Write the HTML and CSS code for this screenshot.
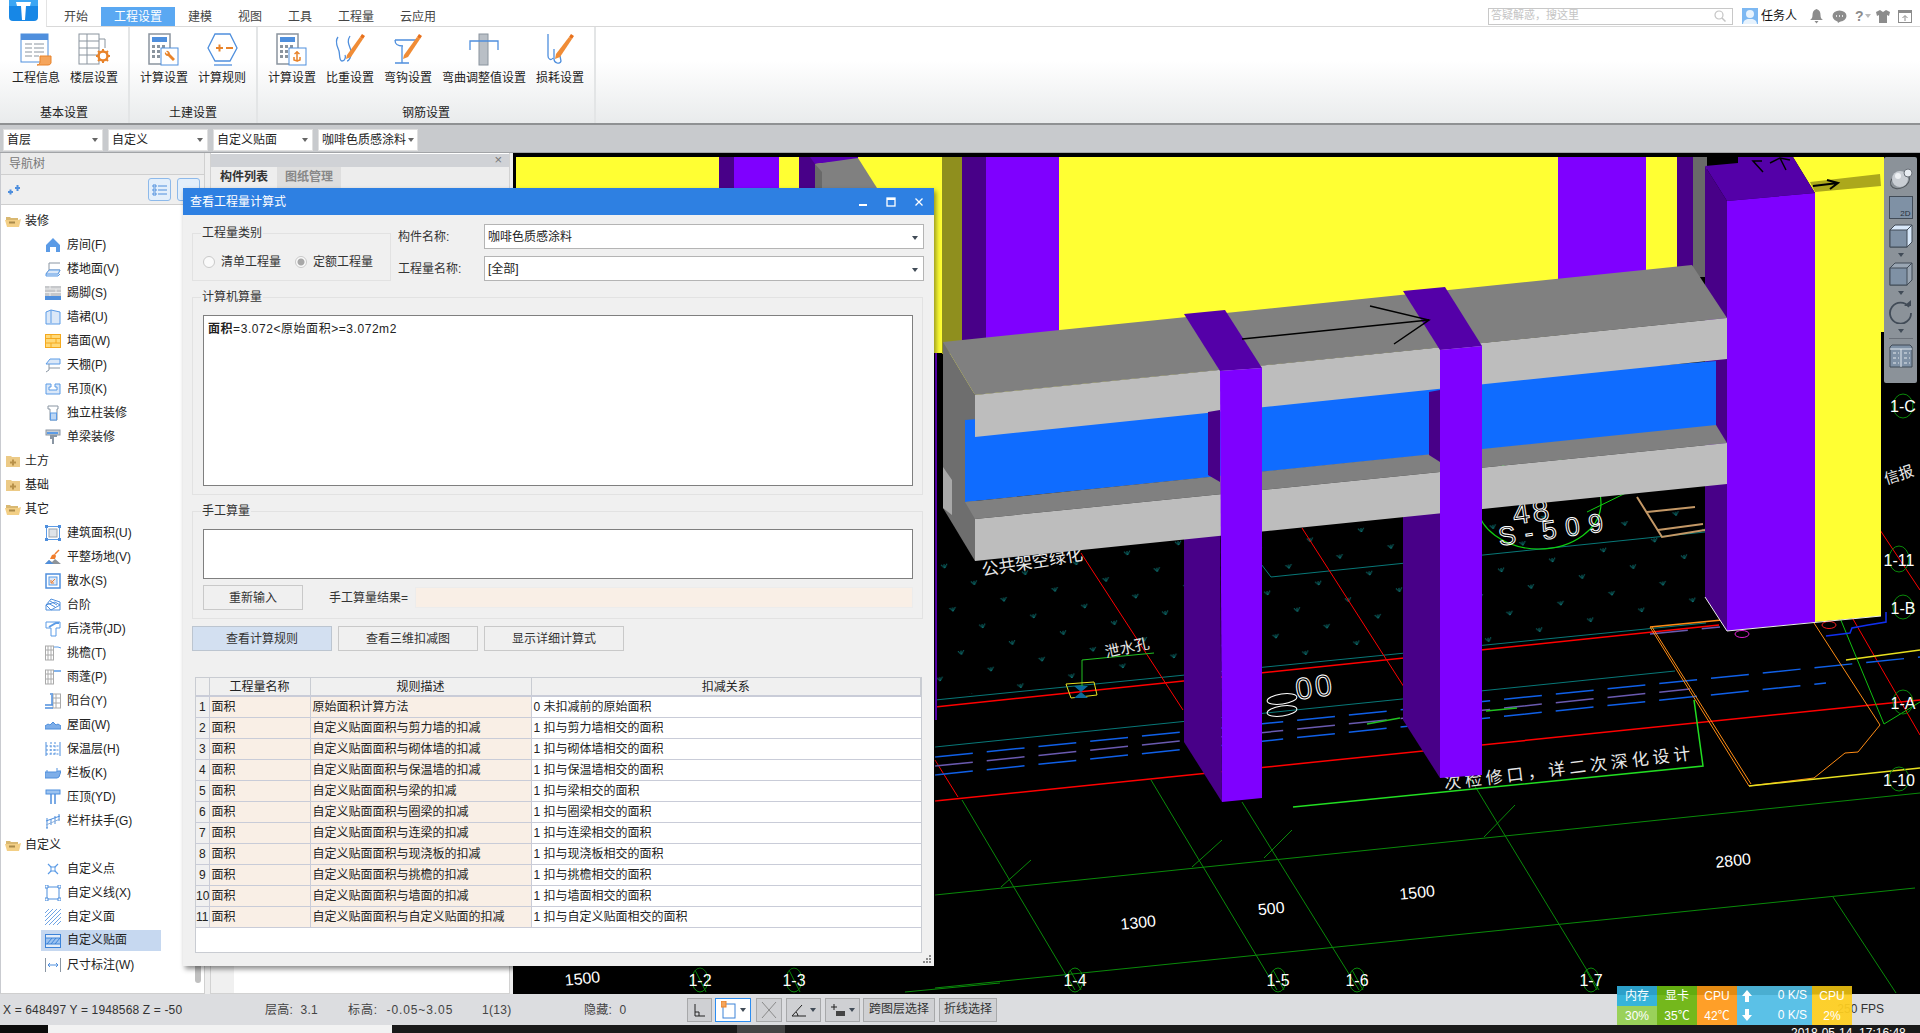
FILE: index.html
```html
<!DOCTYPE html>
<html lang="zh-CN">
<head>
<meta charset="utf-8">
<title>查看工程量计算式</title>
<link rel="stylesheet" href="styles.css">
</head>
<body>
<svg class="defs" width="0" height="0" aria-hidden="true">
  <symbol id="f-open" viewBox="0 0 16 12"><path d="M1 2h4l1 1h7v2H1z" fill="#d9b871"/><path d="M0 5h13l3-1-2 8H2z" fill="#f3cf85"/><rect x="4" y="6.500" width="6" height="2" fill="#a98a4a"/></symbol>
  <symbol id="f-closed" viewBox="0 0 16 12"><path d="M1 1h5l1 1h8v10H1z" fill="#ecca86"/><path d="M7 4.500h2v2h2v2H9v2H7v-2H5v-2h2z" fill="#b8914a"/></symbol>
  <symbol id="i-room" viewBox="0 0 16 16"><path d="M8 1 1 8v7h4v-5h6v5h4V8z" fill="#5b9be6"/></symbol>
  <symbol id="i-floor" viewBox="0 0 16 16"><path d="M4 9V2h11M1 13l3-4h11l-2 4z" fill="none" stroke="#8a96a3"/><path d="M1 13l3-4h11l-2 4H1v2h12l2-2" fill="#dbe8f8" stroke="#5b9be6"/></symbol>
  <symbol id="i-skirt" viewBox="0 0 16 16"><rect width="16" height="10" y="1" fill="#c6c8cb"/><path d="M0 4h16M0 7.500h16M5 1v3M11 4v3.500M5 7.500V11" stroke="#eee"/><rect y="11" width="16" height="4" fill="#4f8fdd"/></symbol>
  <symbol id="i-wains" viewBox="0 0 16 16"><path d="M1 3l5-2 9 2v12H1z" fill="#dbe8f8" stroke="#5b9be6"/><path d="M6 1v13" stroke="#5b9be6"/></symbol>
  <symbol id="i-wall" viewBox="0 0 16 16"><rect x=".5" y="1.500" width="15" height="13" fill="#ffd979" stroke="#f4a91e"/><path d="M1 5.500h14M1 10h14M6 2v3.500M11 5.500V10M6 10v4.500" stroke="#f4a91e"/></symbol>
  <symbol id="i-ceil" viewBox="0 0 16 16"><path d="M1 7l4-5h10v5z" fill="#dbe8f8" stroke="#5b9be6"/><path d="M4 7v6L1 15M4 11h11" stroke="#8a96a3" fill="none"/></symbol>
  <symbol id="i-susp" viewBox="0 0 16 16"><path d="M1 3h5v3H4v3h8V6h-2V3h5v10H1z" fill="#dbe8f8" stroke="#5b9be6"/></symbol>
  <symbol id="i-col" viewBox="0 0 16 16"><path d="M3 1h10v3h-1v11H5V4H3z" fill="#fff" stroke="#8a96a3"/><rect x="5.500" y="8" width="6" height="7" fill="#bcd6f4" stroke="#5b9be6"/></symbol>
  <symbol id="i-beam" viewBox="0 0 16 16"><rect x="1" y="1" width="14" height="5" fill="#c8cdd2" stroke="#8a96a3"/><path d="M2 4h11" stroke="#5b9be6" stroke-width="2"/><path d="M12 7H6v2h2v6" fill="none" stroke="#8a96a3" stroke-width="2"/></symbol>
  <symbol id="i-area" viewBox="0 0 16 16"><rect x="1.500" y="1.500" width="13" height="13" fill="#fff" stroke="#5b9be6"/><rect x="4" y="4" width="8" height="8" fill="#dfe3e8" stroke="#9aa3ad"/><path d="M0 0h3v3H0zM13 0h3v3h-3zM0 13h3v3H0zM13 13h3v3h-3z" fill="#4f8fdd"/></symbol>
  <symbol id="i-grade" viewBox="0 0 16 16"><path d="M0 15l4-4 3 2 3-3 6 5z" fill="#8e949a"/><path d="M0 15l4-4 3 3 2 1z" fill="#4f8fdd"/><path d="M5 10l2-4 3-1 1 2-1 3z" fill="#f07d2c"/><path d="M10 5l4-4" stroke="#f07d2c" stroke-width="1.500"/></symbol>
  <symbol id="i-apron" viewBox="0 0 16 16"><rect x="1" y="1" width="14" height="14" fill="#fff" stroke="#4f8fdd" stroke-width="1.500"/><rect x="4" y="4" width="8" height="8" fill="#dbe8f8" stroke="#5b9be6"/><path d="M10 6 6.500 9.500M6 7v3h3" fill="none" stroke="#f07d2c"/></symbol>
  <symbol id="i-step" viewBox="0 0 16 16"><path d="M1 8l5-6 9 3v8H1z" fill="#fff" stroke="#4f8fdd"/><path d="M1 8l9-3 5 3-9 5zM3 6l7 4M5 4l7 4" fill="none" stroke="#4f8fdd"/></symbol>
  <symbol id="i-post" viewBox="0 0 16 16"><path d="M1 1h14v6h-4v8H6V7H1z" fill="#fff" stroke="#5b9be6"/><path d="M4 6l7-4h3" stroke="#5b9be6" stroke-width="2" fill="none"/></symbol>
  <symbol id="i-eave" viewBox="0 0 16 16"><rect x=".5" y="1" width="8" height="14" fill="#fff" stroke="#aaa"/><path d="M3 1v14M6 1v14M1 5h7M1 10h7" stroke="#aaa"/><path d="M9 2h4l3 1" stroke="#5b9be6" fill="none"/></symbol>
  <symbol id="i-canopy" viewBox="0 0 16 16"><rect x=".5" y="1" width="8" height="14" fill="#fff" stroke="#aaa"/><path d="M3 1v14M6 1v14M1 5h7M1 10h7" stroke="#aaa"/><path d="M9 2h7" stroke="#5b9be6" stroke-width="1.500"/></symbol>
  <symbol id="i-balc" viewBox="0 0 16 16"><rect x="8" y="1" width="7.500" height="14" fill="#fff" stroke="#aaa"/><path d="M11 1v14M8 5h7M8 10h7" stroke="#aaa"/><path d="M0 12h8M5 1h3M7 2v10M0 15h8" stroke="#4f8fdd" stroke-width="1.500" fill="none"/></symbol>
  <symbol id="i-roof" viewBox="0 0 16 16"><path d="M0 12V9l3-2 2 1 3-3 3 3 2-1 3 2v3z" fill="#7eaee8" stroke="#4f8fdd"/></symbol>
  <symbol id="i-insu" viewBox="0 0 16 16"><path d="M1 1v14M15 1v14" stroke="#4f8fdd" fill="none"/><path d="M6 1v14M10 1v14M1 5h14M1 9h14M1 13h14" stroke="#4f8fdd" stroke-dasharray="2 1.500"/></symbol>
  <symbol id="i-para" viewBox="0 0 16 16"><path d="M0 7h11l2-1h3l-2 6-2 1H0z" fill="#7eaee8" stroke="#4f8fdd"/><path d="M2 7V5M12 6V3" stroke="#4f8fdd"/></symbol>
  <symbol id="i-cope" viewBox="0 0 16 16"><rect x="1" y="1" width="14" height="4" fill="#9cc3f0" stroke="#4f8fdd"/><path d="M6 5v10M10 5v10" stroke="#4f8fdd" stroke-width="1.500"/></symbol>
  <symbol id="i-rail" viewBox="0 0 16 16"><path d="M1 8l14-5M2 5v10M6 6v6M10 3v8M14 1v7M1 15h2" stroke="#4f8fdd" fill="none"/><path d="M1 12l14-6" stroke="#8aaedb"/></symbol>
  <symbol id="i-pt" viewBox="0 0 16 16"><path d="M3 3l10 10M13 3L3 13" stroke="#5b9be6" stroke-width="1.200"/><rect x="6" y="6" width="4" height="4" fill="#fff" stroke="#5b9be6"/></symbol>
  <symbol id="i-line" viewBox="0 0 16 16"><rect x="2" y="2" width="12" height="12" fill="#fff" stroke="#4f8fdd"/><path d="M0 0h3v3H0zM13 0h3v3h-3zM0 13h3v3H0zM13 13h3v3h-3z" fill="#fff" stroke="#4f8fdd"/></symbol>
  <symbol id="i-hatch" viewBox="0 0 16 16"><path d="M0 4l4-4M0 8l8-8M0 12 12 0M0 16 16 0M4 16 16 4M8 16l8-8M12 16l4-4" stroke="#6fa4e4"/></symbol>
  <symbol id="i-patch" viewBox="0 0 16 16"><rect x=".5" y="1.500" width="15" height="13" fill="#e3edf9" stroke="#3c83d8"/><rect x="1" y="5" width="14" height="6" fill="#9cc3f0"/><path d="M1 5h14M1 11h14" stroke="#3c83d8"/><path d="M2 11l5-6M6 11l5-6M10 11l5-6" stroke="#3c83d8"/></symbol>
  <symbol id="i-dim" viewBox="0 0 16 16"><path d="M.5 1v14M15.500 1v14" stroke="#8a96a3" fill="none"/><path d="M3 8h10M5 6 3 8l2 2M11 6l2 2-2 2" stroke="#4f8fdd" fill="none"/></symbol>
  <symbol id="r-calc" viewBox="0 0 26 34"><rect x="1" y="1" width="21" height="30" fill="#fff" stroke="#8a949e" stroke-width="1.500"/><rect x="4" y="4" width="15" height="5" fill="#4f8fdd"/><path d="M4 12h3v3H4zM9 12h3v3H9zM14 12h3v3h-3zM4 17h3v3H4zM9 17h3v3H9zM4 22h3v3H4zM9 22h3v3H9z" fill="#8a949e"/></symbol>
</svg>

<div class="app">
  <header class="topbar">
    <div class="logo">
      <svg width="29" height="22" viewBox="0 0 29 22"><path d="M0 0h29v17a4 4 0 0 1-4 4H4a4 4 0 0 1-4-4z" fill="#1787e6"/><path d="M0 0h29v6H0z" fill="#3ba6f4"/><path d="M7 2h15l-1 4h-4l-1 14h-3L12 6H8z" fill="#fff"/></svg>
    </div>
    <nav class="tabs">
      <span class="tab">开始</span>
      <span class="tab tab-active">工程设置</span>
      <span class="tab">建模</span>
      <span class="tab">视图</span>
      <span class="tab">工具</span>
      <span class="tab tab-wide">工程量</span>
      <span class="tab tab-wide">云应用</span>
    </nav>
    <div class="top-right">
      <div class="search"><span>答疑解惑，搜这里</span>
        <svg width="12" height="12" viewBox="0 0 12 12"><circle cx="5" cy="5" r="4" fill="none" stroke="#c4c4c4" stroke-width="1.200"/><path d="M8 8l3.500 3.500" stroke="#c4c4c4" stroke-width="1.500"/></svg>
      </div>
      <svg class="avatar" width="16" height="16" viewBox="0 0 16 16"><rect width="16" height="16" fill="#7db8f2"/><circle cx="8" cy="6" r="4" fill="#e8f3fd"/><path d="M1 16c1-5 4-5 7-5s6 0 7 5z" fill="#e8f3fd"/></svg>
      <span class="user">任务人</span>
      <svg class="ti ti-bell" width="13" height="15" viewBox="0 0 13 15"><path d="M6.500 0C3.500 1 2.500 3 2.500 6c0 3-1 4-2.500 5h13c-1.500-1-2.500-2-2.500-5 0-3-1-5-4-6zM4.500 12h4l-2 2.500z" fill="#8c8c8c"/></svg>
      <svg class="ti ti-chat" width="15" height="13" viewBox="0 0 15 13"><ellipse cx="7.500" cy="6" rx="7" ry="5.500" fill="#8c8c8c"/><path d="M5 10l4 1-3 2z" fill="#8c8c8c"/><path d="M4 6h1M7 6h1M10 6h1" stroke="#fff" stroke-width="1.500"/></svg>
      <span class="help">?<i class="caret caret-light"></i></span>
      <svg class="ti ti-shirt" width="14" height="13" viewBox="0 0 14 13"><path d="M4 0 0 2l1 4 2-1v8h8V5l2 1 1-4-4-2-3 2z" fill="#8c8c8c"/></svg>
      <svg class="ti ti-up" width="14" height="13" viewBox="0 0 14 13"><rect x=".5" y=".5" width="13" height="12" fill="none" stroke="#8c8c8c"/><rect x="1" y="1" width="12" height="2" fill="#8c8c8c"/><path d="M7 11V6M4.500 8 7 5.500 9.500 8" stroke="#8c8c8c" fill="none"/></svg>
    </div>
  </header>

  <section class="ribbon">
    <div class="rgroup rg1">
      <div class="ritems">
        <div class="ritem"><svg width="32" height="34" viewBox="0 0 32 34"><rect x="1" y="1" width="27" height="28" fill="#fff" stroke="#4f8fdd"/><rect x="1" y="1" width="27" height="6" fill="#4f8fdd"/><path d="M5 11h7M14 11h10M5 15h7M14 15h10M5 19h7M14 19h10M5 23h7M14 23h5" stroke="#8a949e"/><path d="M20 23h11v7a3 3 0 0 1-3 2H17c2 0 3-2 3-3z" fill="#f5a55c" stroke="#e8832a"/></svg><span>工程信息</span></div>
        <div class="ritem"><svg width="32" height="34" viewBox="0 0 32 34"><rect x="1" y="1" width="20" height="30" fill="#fff" stroke="#8a949e"/><path d="M1 8h20M1 15h20M1 22h20M9 1v30" stroke="#8a949e"/><path d="M21 6h6v9" fill="none" stroke="#8a949e"/><circle cx="25" cy="23" r="4.500" fill="none" stroke="#e8832a" stroke-width="2.500"/><path d="M25 16v2M25 28v2M18 23h2M30 23h2M20 18l1.500 1.500M30 28l-1.500-1.500M30 18l-1.500 1.500M20 28l1.500-1.500" stroke="#e8832a" stroke-width="2"/></svg><span>楼层设置</span></div>
      </div>
      <div class="rlabel">基本设置</div>
    </div>
    <div class="rgroup rg2">
      <div class="ritems">
        <div class="ritem"><svg width="32" height="34" viewBox="0 0 32 34"><use href="#r-calc" width="26" height="34"/><rect x="13" y="15" width="17" height="17" fill="#fff" stroke="#4f8fdd"/><path d="M17 19a3 3 0 0 0 3 4l5 5 2-2-5-5a3 3 0 0 0-4-3l2 2-1 1z" fill="#e8832a"/></svg><span>计算设置</span></div>
        <div class="ritem"><svg width="32" height="34" viewBox="0 0 32 34"><path d="M9 1h15l7 14-7 13H9L2 15z" fill="#fff" stroke="#4f8fdd" stroke-width="1.300"/><path d="M10 15h7M13.500 11.500v7M20 15h7" stroke="#e8832a" stroke-width="2"/><path d="M8 32h18" stroke="#4f8fdd" stroke-width="1.300"/></svg><span>计算规则</span></div>
      </div>
      <div class="rlabel">土建设置</div>
    </div>
    <div class="rgroup rg3">
      <div class="ritems">
        <div class="ritem"><svg width="32" height="34" viewBox="0 0 32 34"><use href="#r-calc" width="26" height="34"/><rect x="13" y="15" width="17" height="17" fill="#fff" stroke="#4f8fdd"/><path d="M21 18v10l-3-1v-3M21 28l3-1v-3M18.500 21l2.500-2 2.500 2" fill="none" stroke="#e8832a" stroke-width="1.500"/></svg><span>计算设置</span></div>
        <div class="ritem"><svg width="32" height="34" viewBox="0 0 32 34"><path d="M4 4c-4 5 0 10 1 14s0 10 3 10 4-4 3-6M16 3c-4 6 0 10 1 15s-2 10-4 10" fill="none" stroke="#4f8fdd" stroke-width="1.300"/><path d="M13 22 26 4l3 2-12 18-5 2z" fill="#f08c36"/><path d="M26 4l2-3 3 2-2 3z" fill="#e8701a"/></svg><span>比重设置</span></div>
        <div class="ritem"><svg width="32" height="34" viewBox="0 0 32 34"><path d="M3 7h22M3 7c0 5 3 6 8 6M3 30h14M10 13v17" fill="none" stroke="#4f8fdd" stroke-width="1.300"/><path d="M12 22 25 4l3 2-12 18-5 2z" fill="#f08c36"/><path d="M25 4l2-3 3 2-2 3z" fill="#e8701a"/></svg><span>弯钩设置</span></div>
        <div class="ritem ritem-wide"><svg width="32" height="34" viewBox="0 0 32 34"><rect x="11" y="1" width="9" height="31" fill="#b9bfc6" stroke="#8a949e"/><path d="M2 17v-9h28v9" fill="none" stroke="#4f8fdd" stroke-width="1.300"/></svg><span>弯曲调整值设置</span></div>
        <div class="ritem"><svg width="32" height="34" viewBox="0 0 32 34"><path d="M4 1v22c0 3 3 5 5 2M10 16v10c0 4 6 6 7 2l-1-5" fill="none" stroke="#4f8fdd" stroke-width="1.300"/><path d="M12 21 25 4l3 2-12 18-5 2z" fill="#f08c36"/><path d="M25 4l2-3 3 2-2 3z" fill="#e8701a"/></svg><span>损耗设置</span></div>
      </div>
      <div class="rlabel">钢筋设置</div>
    </div>
    <div class="rfill"></div>
  </section>

  <section class="combos">
    <div class="combo">首层<i class="caret"></i></div>
    <div class="combo">自定义<i class="caret"></i></div>
    <div class="combo">自定义贴面<i class="caret"></i></div>
    <div class="combo combo-tight">咖啡色质感涂料<i class="caret"></i></div>
  </section>

  <main class="main">
    <aside class="nav">
      <div class="nav-head">导航树</div>
      <div class="nav-tools">
        <svg class="spark" width="14" height="12" viewBox="0 0 14 12"><path d="M1 8h5M3.500 5.500v5M8 4h5M10.500 1v6" stroke="#4f8fdd" stroke-width="2"/></svg>
        <span class="nbtn"><svg width="16" height="14" viewBox="0 0 16 14"><path d="M1 2h3v2H1zM1 6h3v2H1zM1 10h3v2H1z" fill="none" stroke="#4f8fdd"/><path d="M6 3h9M6 7h9M6 11h9" stroke="#4f8fdd"/></svg></span>
        <span class="nbtn"></span>
      </div>
      <ul class="tree">
        <li class="folder"><svg width="16" height="12"><use href="#f-open"/></svg>装修</li>
        <li><svg width="16" height="16"><use href="#i-room"/></svg>房间(F)</li>
        <li><svg width="16" height="16"><use href="#i-floor"/></svg>楼地面(V)</li>
        <li><svg width="16" height="16"><use href="#i-skirt"/></svg>踢脚(S)</li>
        <li><svg width="16" height="16"><use href="#i-wains"/></svg>墙裙(U)</li>
        <li><svg width="16" height="16"><use href="#i-wall"/></svg>墙面(W)</li>
        <li><svg width="16" height="16"><use href="#i-ceil"/></svg>天棚(P)</li>
        <li><svg width="16" height="16"><use href="#i-susp"/></svg>吊顶(K)</li>
        <li><svg width="16" height="16"><use href="#i-col"/></svg>独立柱装修</li>
        <li><svg width="16" height="16"><use href="#i-beam"/></svg>单梁装修</li>
        <li class="folder"><svg width="16" height="12"><use href="#f-closed"/></svg>土方</li>
        <li class="folder"><svg width="16" height="12"><use href="#f-closed"/></svg>基础</li>
        <li class="folder"><svg width="16" height="12"><use href="#f-open"/></svg>其它</li>
        <li><svg width="16" height="16"><use href="#i-area"/></svg>建筑面积(U)</li>
        <li><svg width="16" height="16"><use href="#i-grade"/></svg>平整场地(V)</li>
        <li><svg width="16" height="16"><use href="#i-apron"/></svg>散水(S)</li>
        <li><svg width="16" height="16"><use href="#i-step"/></svg>台阶</li>
        <li><svg width="16" height="16"><use href="#i-post"/></svg>后浇带(JD)</li>
        <li><svg width="16" height="16"><use href="#i-eave"/></svg>挑檐(T)</li>
        <li><svg width="16" height="16"><use href="#i-canopy"/></svg>雨蓬(P)</li>
        <li><svg width="16" height="16"><use href="#i-balc"/></svg>阳台(Y)</li>
        <li><svg width="16" height="16"><use href="#i-roof"/></svg>屋面(W)</li>
        <li><svg width="16" height="16"><use href="#i-insu"/></svg>保温层(H)</li>
        <li><svg width="16" height="16"><use href="#i-para"/></svg>栏板(K)</li>
        <li><svg width="16" height="16"><use href="#i-cope"/></svg>压顶(YD)</li>
        <li><svg width="16" height="16"><use href="#i-rail"/></svg>栏杆扶手(G)</li>
        <li class="folder"><svg width="16" height="12"><use href="#f-open"/></svg>自定义</li>
        <li><svg width="16" height="16"><use href="#i-pt"/></svg>自定义点</li>
        <li><svg width="16" height="16"><use href="#i-line"/></svg>自定义线(X)</li>
        <li><svg width="16" height="16"><use href="#i-hatch"/></svg>自定义面</li>
        <li class="selected"><svg width="16" height="16"><use href="#i-patch"/></svg>自定义贴面</li>
        <li><svg width="16" height="16"><use href="#i-dim"/></svg>尺寸标注(W)</li>
      </ul>
      <span class="nav-scroll"></span>
    </aside>

    <aside class="list">
      <div class="list-head"><span class="close">×</span></div>
      <div class="list-tabs"><span class="ltab ltab-on">构件列表</span><span class="ltab">图纸管理</span></div>
      <div class="list-body"></div>
    </aside>

    <div class="view">
      <svg class="scene" width="1407" height="841" viewBox="513 153 1407 841">
        <defs>
          <pattern id="trees" width="52" height="44" patternUnits="userSpaceOnUse" patternTransform="rotate(-11)">
            <path d="M10 8l3 4 3-4M13 8v4M36 30l3 4 3-4M39 30v4" stroke="#0b7272" fill="none"/>
          </pattern>
        </defs>
        <rect x="513" y="153" width="1407" height="841" fill="#000"/>

        <!-- floor plan -->
        <polygon points="937,555 1710,505 1710,620 937,697" fill="url(#trees)"/>
        <path d="M935 700 1706 623M935 747 1675 671M1271 577 1705 532M1271 577 1258 560" fill="none" stroke="#087878"/>
        <g fill="none" stroke="#ff0000" stroke-width="1">
          <path d="M935 801 1920 700" stroke-width="1.500"/>
          <path d="M935 707 1719 625" stroke-width="1.500"/>
          <path d="M1081 553 1183 710M1302 528 1404 687M935 760 958 797M1880 530 1920 590M1842 600 1920 735"/>
        </g>
        <g fill="none" stroke="#1060e8" stroke-width="1.500" stroke-dasharray="38 14">
          <path d="M935 757 1920 657M935 775 1826 683"/>
        </g>
        <path d="M935 766 1690 689M1650 634 1720 627" fill="none" stroke="#6a5ab0" stroke-width="1.500" stroke-dasharray="38 14"/>
        <g fill="none" stroke="#0a8a0a" stroke-width="1">
          <path d="M935 895 1920 793M935 988 1915 888"/>
          <path d="M962 800 1075 990M1151 780 1277 990M1242 802 1359 990M1470 778 1599 990M1833 897 1896 993"/>
          <path d="M1001 887 1031 860M1192 867 1222 840M1264 858 1292 830M1484 837 1515 805"/>
        </g>
        <path d="M1293 807 1703 766 1694 700" fill="none" stroke="#22dd22" stroke-width="1.500"/>
        <path d="M1082 688V660L1154 653" fill="none" stroke="#22c022" stroke-width="1"/>
        <path d="M1367 724 1400 718M1486 711 1517 708" stroke="#22c022" stroke-width="1.500" fill="none"/>
        <path d="M1066 684 1094 682 1097 695 1071 698z" fill="none" stroke="#e8e020"/>
        <path d="M1074 686h14l-14 12h14z" fill="#0a6a9a"/>
        <g fill="none" stroke="#ff8c14" stroke-width="1">
          <path d="M1650 627 1749 786 1814 778 1845 753 1858 752 1880 725 1814 623"/>
          <path d="M1652 627 1751 784"/>
          <path d="M1650 627 1722 620" stroke-width="1.500"/>
        </g>
        <path d="M1749 786 1920 768" stroke="#e8e020" stroke-width="1.500" fill="none"/>
        <path d="M1846 660 1920 650" stroke="#e8e020" stroke-width="1.500" fill="none"/>
        <path d="M1840 618 1884 724 1920 702" stroke="#10c010" fill="none"/>
        <path d="M1826 636 1850 633 1852 628 1868 625 1886 622 1886 612" fill="none" stroke="#1030f0" stroke-width="1.500"/>
        <ellipse cx="1742" cy="634" rx="7" ry="3.500" fill="none" stroke="#e020d0"/>
        <ellipse cx="1829" cy="625" rx="7" ry="3.500" fill="none" stroke="#f02020"/>
        <path d="M1637 497 1662 537 1705 530M1647 512 1695 507M1658 530 1703 524" fill="none" stroke="#c49866" stroke-width="2"/>
        <ellipse cx="1539" cy="503" rx="62" ry="46" fill="none" stroke="#10d010" stroke-width="1.200"/>
        <path d="M1587 512 1632 490" stroke="#10d010" fill="none"/>

        <g class="cad">
          <text x="583" y="984" transform="rotate(-6 583 984)" text-anchor="middle">1500</text>
          <text x="1138" y="928" transform="rotate(-6 1138 921)" text-anchor="middle">1300</text>
          <text x="1271" y="914" transform="rotate(-6 1271 907)" text-anchor="middle">500</text>
          <text x="1417" y="898" transform="rotate(-6 1417 892)" text-anchor="middle">1500</text>
          <text x="1733" y="866" transform="rotate(-6 1733 860)" text-anchor="middle">2800</text>
          <text class="cad-s" x="1127" y="653" transform="rotate(-12 1127 647)" text-anchor="middle">泄水孔</text>
          <text class="cad-w" x="1032" y="568" transform="rotate(-9 1032 561)" text-anchor="middle">公共架空绿化</text>
          <text class="cad-l" x="1569" y="774" transform="rotate(-7 1569 767)" text-anchor="middle">次检修口，详二次深化设计</text>
          <text class="cad-s" x="1899" y="480" transform="rotate(-18 1899 475)" text-anchor="middle">信报</text>
        </g>
        <g class="cad-big">
          <text x="1315" y="697" transform="rotate(-8 1315 687)" text-anchor="middle">00</text>
          <text x="1532" y="522" transform="rotate(-8 1532 510)" text-anchor="middle">48</text>
          <text class="cad-long" x="1555" y="538" transform="rotate(-8 1555 528)" text-anchor="middle">S-509</text>
          <ellipse cx="1282" cy="699" rx="15" ry="5" transform="rotate(-8 1282 699)"/>
          <ellipse cx="1282" cy="711" rx="15" ry="5" transform="rotate(-8 1282 711)"/>
        </g>
        <g class="axis">
          <ellipse cx="700" cy="980" rx="8" ry="12"/><ellipse cx="794" cy="980" rx="8" ry="12"/>
          <ellipse cx="1075" cy="980" rx="8" ry="12"/><ellipse cx="1278" cy="980" rx="8" ry="12"/>
          <ellipse cx="1357" cy="980" rx="8" ry="12"/><ellipse cx="1591" cy="980" rx="8" ry="12"/>
          <ellipse cx="1903" cy="406" rx="10" ry="12"/><ellipse cx="1899" cy="559" rx="10" ry="13"/>
          <ellipse cx="1903" cy="607" rx="10" ry="12"/><ellipse cx="1903" cy="702" rx="10" ry="12"/><ellipse cx="1899" cy="779" rx="10" ry="12"/>
          <path d="M695 970 706 992M789 970 800 992M1070 970 1081 990M1273 970 1284 990M1352 970 1363 990M1586 970 1597 990"/>
        </g>
        <g class="axis-t">
          <text x="700" y="986">1-2</text><text x="794" y="986">1-3</text>
          <text x="1075" y="986">1-4</text><text x="1278" y="986">1-5</text>
          <text x="1357" y="986">1-6</text><text x="1591" y="986">1-7</text>
          <text x="1903" y="412">1-C</text><text x="1899" y="566">1-11</text>
          <text x="1903" y="614">1-B</text><text x="1903" y="709">1-A</text><text x="1899" y="786">1-10</text>
        </g>
        <path d="M905 992 1000 983" stroke="#0a8a0a" fill="none"/>

        <!-- walls and background columns -->
        <polygon points="516,157 1700,157 1700,320 975,395 942,353 516,353" fill="#ffff33"/>
        <rect x="719" y="157" width="15" height="40" fill="#480088"/>
        <rect x="734" y="157" width="45" height="40" fill="#7f00ff"/>
        <rect x="799" y="157" width="16" height="40" fill="#480088"/>
        <polygon points="810,157 858,157 858,160 815,164" fill="#5a00b4"/>
        <polygon points="815,164 858,158 877,188 815,188" fill="#808080"/>
        <polygon points="815,164 822,172 822,188 815,188" fill="#696969"/>
        <rect x="942" y="157" width="20" height="196" fill="#8f8f1e"/>
        <rect x="962" y="157" width="24" height="190" fill="#480088"/>
        <rect x="986" y="157" width="73" height="190" fill="#7f00ff"/>
        <rect x="1558" y="157" width="88" height="140" fill="#7f00ff"/>
        <rect x="1677" y="157" width="16" height="120" fill="#480088"/>
        <rect x="1693" y="157" width="14" height="120" fill="#696969"/>
        <path d="M936 353V720" stroke="#6a00d0" stroke-width="2"/>

        <!-- right column side, behind beams -->
        <polygon points="1705,166 1727,201 1727,631 1705,597" fill="#480088"/>
        <!-- right yellow wall -->
        <polygon points="1793,157 1884,157 1884,332 1881,332 1881,616 1815,622 1815,193" fill="#ffff33"/>
        <polygon points="1810,182 1880,174 1881,186 1815,192" fill="#aca81c"/>

        <!-- lower column sides -->
        <polygon points="1184,530 1220,530 1222,802 1184,742" fill="#480088"/>
        <polygon points="1403,480 1440,480 1440,778 1403,720" fill="#480088"/>

        <!-- beam -->
        <polygon points="943,342 975,395 975,561 943,508" fill="#6e6e6e"/>
        <polygon points="943,467 952,480 952,515 943,508" fill="#a8a8a8"/>
        <polygon points="943,342 1692,265 1727,318 975,395" fill="#808080"/>
        <polygon points="965,420 1716,361 1716,426 965,502" fill="#0f6cff"/>
        <polygon points="975,395 1727,318 1727,359 975,437" fill="#bdbdbd"/>
        <polygon points="965,502 1716,425 1727,443 975,519" fill="#808080"/>
        <polygon points="975,519 1727,443 1727,484 975,561" fill="#bdbdbd"/>
        <polygon points="1208,412 1220,410 1220,482 1208,475" fill="#480088"/>
        <polygon points="1429,392 1440,390 1440,462 1429,455" fill="#480088"/>

        <!-- column tops and fronts -->
        <polygon points="1184,314 1225,310 1262,368 1220,371" fill="#5400a8"/>
        <polygon points="1220,371 1262,368 1262,798 1222,802" fill="#7f00ff"/>
        <polygon points="1403,291 1445,287 1482,346 1440,350" fill="#5400a8"/>
        <polygon points="1440,350 1482,346 1482,775 1440,778" fill="#7f00ff"/>
        <polygon points="1705,166 1738,163 1738,157 1793,157 1815,193 1727,201" fill="#5400a8"/>
        <polygon points="1727,201 1815,193 1815,622 1727,631" fill="#7f00ff"/>
        <path d="M1705 597 1727 631 1881 616" fill="none" stroke="#eee"/>

        <!-- arrows -->
        <g fill="none" stroke="#000" stroke-width="1.500">
          <path d="M1242 339 1429 320M1370 306 1429 320 1394 344"/>
          <path d="M1763 172 1753 161 1762 161M1786 170 1780 158M1770 163 1780 158 1790 160"/>
          <path d="M1813 186 1838 183M1827 180 1838 183 1830 189" stroke-width="2"/>
        </g>
      </svg>

      <div class="cube-tools">
        <svg width="24" height="24" viewBox="0 0 24 24"><ellipse cx="11" cy="14" rx="10" ry="7" fill="none" stroke="#50565c" transform="rotate(-25 11 14)"/><circle cx="11" cy="12" r="8" fill="#c9ced4"/><circle cx="9" cy="9" r="3" fill="#eef1f4"/><circle cx="19" cy="6" r="4" fill="#e8edf2" stroke="#6a7078"/></svg>
        <span class="ct-box"><b>2D</b></span>
        <svg width="24" height="24" viewBox="0 0 24 24"><path d="M1 6l5-5h17v17l-5 5H1z" fill="#d9e9fa" stroke="#414b57"/><rect x="1" y="6" width="17" height="17" fill="#7f91a5" stroke="#414b57"/><path d="M18 6l5-5" stroke="#414b57"/></svg>
        <i class="caret caret-dark"></i>
        <svg width="24" height="24" viewBox="0 0 24 24"><path d="M1 6l5-5h17v17l-5 5H1z" fill="#9aa6b3" stroke="#414b57"/><rect x="1" y="6" width="17" height="17" fill="#7f91a5" stroke="#414b57"/><path d="M18 6l5-5" stroke="#414b57"/></svg>
        <i class="caret caret-dark"></i>
        <svg width="24" height="24" viewBox="0 0 24 24"><path d="M20 7A10.500 10.500 0 1 0 22 13" fill="none" stroke="#414b57" stroke-width="1.800"/><path d="M15 6h7V0z" fill="#414b57"/></svg>
        <i class="caret caret-dark"></i>
        <span class="ct-sep"></span>
        <svg width="24" height="24" viewBox="0 0 24 24"><path d="M1 3l2-2h18l2 2v20H1z" fill="#7f91a5" stroke="#414b57"/><path d="M1 5h22M12 5v18M4 9h3M4 14h3M4 19h3M9 9h1M9 14h1M9 19h1M15 9h3M15 14h3M15 19h3M20 9h1M20 14h1M20 19h1" stroke="#e3e8ee"/></svg>
      </div>
    </div>
  </main>

  <footer class="status">
    <span class="st st-coord">X = 648497 Y = 1948568 Z = -50</span>
    <span class="st st-floor">层高:&nbsp;&nbsp;3.1</span>
    <span class="st st-elev">标高:&nbsp;&nbsp;-0.05~3.05</span>
    <span class="st st-count">1(13)</span>
    <span class="st st-hide">隐藏:&nbsp;&nbsp;0</span>
    <span class="sb sb1"><svg width="14" height="14" viewBox="0 0 14 14"><path d="M2 1v12h10M2 9h4v4" fill="none" stroke="#222"/></svg></span>
    <span class="sb sb2"><svg width="16" height="18" viewBox="0 0 16 18"><rect x="2" y="3" width="12" height="14" fill="#fff" stroke="#3c83d8"/><rect x="0" y="0" width="5" height="6" fill="#f5a55c" stroke="#e8832a"/></svg><i class="caret caret-dark"></i></span>
    <span class="sb sb3"><svg width="16" height="18" viewBox="0 0 16 18"><path d="M1 1l14 16M15 1 1 17" stroke="#8a8a8a"/></svg></span>
    <span class="sb sb4"><svg width="16" height="14" viewBox="0 0 16 14"><path d="M1 13h14M1 13 11 2" stroke="#222" fill="none"/><path d="M7 13a6 6 0 0 0-2-4" stroke="#222" fill="none"/></svg><i class="caret caret-dark"></i></span>
    <span class="sb sb5"><svg width="16" height="14" viewBox="0 0 16 14"><path d="M1 4h6M4 1v6" stroke="#222"/><rect x="6" y="8" width="9" height="5" fill="#444"/></svg><i class="caret caret-dark"></i></span>
    <span class="sb sb6">跨图层选择</span>
    <span class="sb sb7">折线选择</span>
    <span class="fps">250 FPS</span>
    <div class="monitor">
      <div class="mc mc-mem"><span>内存</span><span class="m-low">30%</span></div>
      <div class="mc mc-gpu"><span>显卡</span><span>35℃</span></div>
      <div class="mc mc-cpu"><span>CPU</span><span>42℃</span></div>
      <div class="mc mc-net">
        <span><svg width="10" height="12" viewBox="0 0 10 12"><path d="M5 0 10 6H7v6H3V6H0z" fill="#fff"/></svg><em>0 K/S</em></span>
        <span><svg width="10" height="12" viewBox="0 0 10 12"><path d="M5 12 0 6h3V0h4v6h3z" fill="#fff"/></svg><em>0 K/S</em></span>
      </div>
      <div class="mc mc-cp2"><span>CPU</span><span>2%</span></div>
    </div>
  </footer>

  <div class="taskbar">
    <span class="tk tk-a"></span><span class="tk tk-b"></span><span class="tk tk-c"></span><span class="tk tk-d"></span>
    <span class="clock">2018-05-14&nbsp;&nbsp;17:16:48</span>
  </div>

  <section class="dialog">
    <div class="dlg-title">
      <span>查看工程量计算式</span>
      <div class="dlg-ctl">
        <svg width="10" height="10" viewBox="0 0 10 10"><rect x="1" y="7" width="8" height="2" fill="#fff"/></svg>
        <svg width="10" height="10" viewBox="0 0 10 10"><rect x="1" y="1" width="8" height="8" fill="none" stroke="#fff" stroke-width="1.300"/><rect x="1" y="1" width="8" height="2" fill="#fff"/></svg>
        <svg width="10" height="10" viewBox="0 0 10 10"><path d="M1.500 1.500l7 7M8.500 1.500l-7 7" stroke="#fff" stroke-width="1.300"/></svg>
      </div>
    </div>
    <div class="dlg-body">
      <div class="dlg-top">
        <fieldset class="grp grp-kind">
          <legend>工程量类别</legend>
          <div class="radios">
            <label class="radio"><i class="dot"></i>清单工程量</label>
            <label class="radio"><i class="dot dot-on"></i>定额工程量</label>
          </div>
        </fieldset>
        <div class="dlg-fields">
          <div class="fld"><span class="fld-l">构件名称:</span><div class="fld-s">咖啡色质感涂料<i class="caret caret-dark"></i></div></div>
          <div class="fld"><span class="fld-l">工程量名称:</span><div class="fld-s">[全部]<i class="caret caret-dark"></i></div></div>
        </div>
      </div>
      <fieldset class="grp grp-auto">
        <legend>计算机算量</legend>
        <div class="box box-auto"><b>面积</b>=3.072&lt;原始面积&gt;=3.072m2</div>
      </fieldset>
      <fieldset class="grp grp-manual">
        <legend>手工算量</legend>
        <div class="box box-man"></div>
        <div class="man-row">
          <span class="btn btn-reset">重新输入</span>
          <span class="man-l">手工算量结果=</span>
          <span class="man-r"></span>
        </div>
      </fieldset>
      <div class="btns">
        <span class="btn btn-w btn-on">查看计算规则</span>
        <span class="btn btn-w">查看三维扣减图</span>
        <span class="btn btn-w">显示详细计算式</span>
      </div>
      <div class="grid-wrap">
        <table class="grid">
          <colgroup><col class="c0"><col class="c1"><col class="c2"><col class="c3"></colgroup>
          <thead><tr><th></th><th>工程量名称</th><th>规则描述</th><th>扣减关系</th></tr></thead>
          <tbody>
            <tr><td class="n">1</td><td class="t">面积</td><td class="t">原始面积计算方法</td><td>0 未扣减前的原始面积</td></tr>
            <tr><td class="n">2</td><td class="t">面积</td><td class="t">自定义贴面面积与剪力墙的扣减</td><td>1 扣与剪力墙相交的面积</td></tr>
            <tr><td class="n">3</td><td class="t">面积</td><td class="t">自定义贴面面积与砌体墙的扣减</td><td>1 扣与砌体墙相交的面积</td></tr>
            <tr><td class="n">4</td><td class="t">面积</td><td class="t">自定义贴面面积与保温墙的扣减</td><td>1 扣与保温墙相交的面积</td></tr>
            <tr><td class="n">5</td><td class="t">面积</td><td class="t">自定义贴面面积与梁的扣减</td><td>1 扣与梁相交的面积</td></tr>
            <tr><td class="n">6</td><td class="t">面积</td><td class="t">自定义贴面面积与圈梁的扣减</td><td>1 扣与圈梁相交的面积</td></tr>
            <tr><td class="n">7</td><td class="t">面积</td><td class="t">自定义贴面面积与连梁的扣减</td><td>1 扣与连梁相交的面积</td></tr>
            <tr><td class="n">8</td><td class="t">面积</td><td class="t">自定义贴面面积与现浇板的扣减</td><td>1 扣与现浇板相交的面积</td></tr>
            <tr><td class="n">9</td><td class="t">面积</td><td class="t">自定义贴面面积与挑檐的扣减</td><td>1 扣与挑檐相交的面积</td></tr>
            <tr><td class="n">10</td><td class="t">面积</td><td class="t">自定义贴面面积与墙面的扣减</td><td>1 扣与墙面相交的面积</td></tr>
            <tr><td class="n">11</td><td class="t">面积</td><td class="t">自定义贴面面积与自定义贴面的扣减</td><td>1 扣与自定义贴面相交的面积</td></tr>
          </tbody>
        </table>
      </div>
    </div>
    <svg class="grip" width="8" height="8" viewBox="0 0 8 8"><path d="M6 0h2v2H6zM3 3h2v2H3zM6 3h2v2H6zM0 6h2v2H0zM3 6h2v2H3zM6 6h2v2H6z" fill="#8a8a8a"/></svg>
  </section>
</div>
</body>
</html>
```

FILE: styles.css
```css
* { box-sizing: border-box; }
html, body { margin: 0; height: 100%; overflow: hidden; }
body { font: 12px/1.2 "Liberation Sans", "Noto Sans CJK SC", sans-serif; color: #222; background: #fff; }
.defs { position: absolute; }
.app { position: relative; width: 1920px; height: 1033px; display: flex; flex-direction: column; overflow: hidden; }

/* top bar */
.topbar { height: 27px; flex: none; display: flex; align-items: flex-end; background: #fff; }
.logo { width: 29px; margin-left: 9px; align-self: flex-start; }
.tabs { display: flex; margin-left: 8px; padding-left: 4px; height: 27px; align-items: flex-end; border-bottom: 1px solid #d9d9d9; border-left: 1px solid #e3e3e3; }
.tab { width: 50px; height: 19px; line-height: 21px; text-align: center; color: #444; font-size: 12px; }
.tab-wide { width: 62px; }
.tab-active { width: 74px; background: #5aa8f2; color: #fff; }
.top-right { flex: 1; height: 27px; display: flex; align-items: center; border-bottom: 1px solid #d9d9d9; padding: 6px 0 0 1039px; }
.search { width: 245px; height: 17px; border: 1px solid #c8c8c8; display: flex; align-items: center; justify-content: space-between; padding: 0 6px 0 2px; color: #c4c4c4; font-size: 11px; }
.avatar { margin-left: 9px; }
.user { margin-left: 3px; width: 36px; color: #111; }
.ti-bell { margin-left: 13px; }
.ti-chat { margin-left: 9px; }
.help { margin-left: 8px; width: 18px; color: #8c8c8c; font-size: 14px; font-weight: 700; display: flex; align-items: center; gap: 1px; }
.ti-shirt { margin-left: 3px; }
.ti-up { margin-left: 8px; }

.caret { display: block; width: 0; height: 0; border: 3px solid transparent; border-top: 4px solid #666; border-bottom: 0; }
.caret-light { border-top-color: #bbb; }
.caret-dark { border-top-color: #414b57; }

/* ribbon */
.ribbon { height: 98px; flex: none; display: flex; background: linear-gradient(#fff 0%, #fff 35%, #e9ebec 100%); border-bottom: 2px solid #8f9193; }
.rgroup { display: flex; flex-direction: column; height: 96px; border-right: 2px solid #e3e5e6; }
.rg1 { width: 130px; padding-left: 7px; }
.rg2 { width: 128px; padding-left: 5px; }
.rg3 { width: 338px; padding-left: 5px; }
.rfill { flex: 1; }
.ritems { display: flex; flex: 1; }
.ritem { width: 58px; padding-top: 6px; display: flex; flex-direction: column; align-items: center; font-size: 12px; }
.ritem svg { flex: none; }
.ritem span { margin-top: 1px; line-height: 20px; white-space: nowrap; color: #222; }
.ritem-wide { width: 94px; }
.rlabel { height: 20px; line-height: 20px; text-align: center; color: #222; }
.rg1 .rlabel { padding-right: 7px; }
.rg2 .rlabel { padding-right: 5px; }
.rg3 .rlabel { padding-right: 5px; }

/* combos */
.combos { height: 28px; flex: none; display: flex; gap: 5px; align-items: center; padding: 2px 0 0 3px; background: #c8cacd; border-bottom: 1px solid #a2a4a7; }
.combo { width: 100px; height: 22px; background: #fff; border: 1px solid #e0e0e0; display: flex; align-items: center; justify-content: space-between; padding: 1px 4px 0 3px; font-size: 12px; }
.combo-tight { padding-right: 3px; }

/* main */
.main { height: 841px; flex: none; display: flex; background: #eee; }
.nav { position: relative; width: 205px; flex: none; display: flex; flex-direction: column; background: #fff; border-left: 1px solid #c9cbd0; border-right: 1px solid #d0d0d0; border-bottom: 1px solid #cfcfcf; }
.nav-head { height: 22px; line-height: 23px; padding-left: 8px; background: #ebebeb; color: #777; border-bottom: 1px solid #cfcfcf; }
.nav-tools { height: 30px; display: flex; align-items: center; gap: 6px; background: #efefef; border-bottom: 1px solid #cfcfcf; padding-left: 6px; }
.spark { margin-right: 121px; }
.nbtn { width: 23px; height: 23px; border: 1px solid #8db9ea; border-radius: 3px; background: #e3effb; display: flex; align-items: center; justify-content: center; }
.tree { list-style: none; margin: 0; padding: 4px 0 0 40px; flex: 1; }
.tree li { height: 24px; display: flex; align-items: center; gap: 6px; padding-left: 4px; width: 120px; white-space: nowrap; color: #222; }
.tree li svg { flex: none; }
.tree .folder { margin-left: -40px; width: 160px; padding-left: 4px; gap: 4px; }
.tree .selected { background: #c6d8f0; height: 21px; margin: 1px 0 2px; }
.nav-scroll { position: absolute; left: 194px; top: 806px; width: 6px; height: 24px; background: #c0c0c0; border-radius: 3px; }

.list { width: 300px; margin-left: 5px; flex: none; display: flex; flex-direction: column; border: 1px solid #d2d2d2; border-top: 0; background: #fff; }
.list-head { height: 13px; margin-top: 1px; background: #d0d2d6; text-align: right; padding-right: 7px; color: #777; font-size: 13px; line-height: 12px; }
.list-tabs { height: 21px; background: #ededed; display: flex; }
.ltab { width: 65px; line-height: 21px; text-align: center; background: #dedede; color: #888; font-weight: 700; border-left: 1px solid #eee; }
.ltab-on { background: #eee; color: #333; }
.list-body { flex: 1; background: linear-gradient(90deg, #f0f0f0 23px, #fff 23px); }

.view { position: relative; width: 1407px; margin-left: 3px; flex: none; background: #000; }
.scene { display: block; }
.cad text { fill: #fff; font: 16px "Liberation Sans", "Noto Sans CJK SC", sans-serif; }
.cad .cad-s { font-size: 15px; fill: #e8e8e8; }
.cad .cad-w { font-size: 17px; fill: #e8e8e8; }
.cad .cad-l { font-size: 17px; letter-spacing: 4px; fill: #e8e8e8; }
.cad-big text { fill: none; stroke: #fff; stroke-width: 1; font: 30px "Liberation Sans", sans-serif; letter-spacing: 3px; }
.cad-big .cad-long { font-size: 26px; letter-spacing: 9px; }
.cad-big ellipse { fill: none; stroke: #fff; }
.axis { fill: none; stroke: #0a8a0a; }
.axis-t text { fill: #fff; font: 16px "Liberation Sans", sans-serif; text-anchor: middle; }

.cube-tools { position: absolute; left: 1371px; top: 4px; width: 33px; height: 226px; padding-top: 10px; background: #8b9299; border-radius: 2px; display: flex; flex-direction: column; align-items: center; gap: 5px; }
.ct-box { width: 24px; height: 23px; background: #7f91a5; border: 1px solid #414b57; display: flex; align-items: flex-end; justify-content: flex-end; padding-right: 1px; }
.ct-box b { font: 8px "Liberation Sans", sans-serif; color: #26303b; }
.ct-sep { width: 24px; border-top: 1px solid #6a7078; }

/* status */
.status { position: relative; height: 31px; flex: none; display: flex; align-items: center; padding-left: 3px; background: #dcdde0; color: #444; }
.st { white-space: nowrap; font-size: 12px; padding-top: 2px; letter-spacing: .3px; }
.st-coord { width: 262px; letter-spacing: .15px; color: #333; }
.st-floor { width: 83px; }
.st-elev { width: 134px; letter-spacing: .9px; }
.st-count { width: 102px; }
.st-hide { width: 103px; }
.sb { height: 24px; flex: none; display: flex; align-items: center; justify-content: center; gap: 3px; background: #cfd0d3; border: 1px solid #a7a8aa; color: #333; }
.sb1 { width: 25px; margin-right: 3px; }
.sb2 { width: 36px; margin-right: 5px; background: #fff; border-color: #2b8cf0; }
.sb3 { width: 26px; margin-right: 4px; }
.sb4 { width: 35px; margin-right: 4px; }
.sb5 { width: 35px; margin-right: 3px; }
.sb6 { width: 72px; margin-right: 4px; }
.sb7 { width: 58px; }
.fps { margin-left: auto; margin-right: 36px; color: #333; }
.monitor { position: absolute; left: 1617px; top: -8px; width: 235px; height: 39px; display: flex; color: #fff; font-size: 12px; text-align: center; }
.mc { width: 40px; display: flex; flex-direction: column; }
.mc span { height: 19.500px; line-height: 21px; }
.mc-mem { background: linear-gradient(#2b9fc9 9px, #36b4da 9px); }
.mc-mem .m-low { background: #9ad15a; }
.mc-gpu { background: linear-gradient(#62ac10 9px, #74b81c 9px); }
.mc-cpu { background: linear-gradient(#e48a12 9px, #ff9f28 9px); }
.mc-net { width: 75px; background: linear-gradient(#4aaed1 9px, #5bc1e7 9px); }
.mc-net span { display: flex; justify-content: space-between; align-items: center; padding: 0 5px; }
.mc-net em { font-style: normal; }
.mc-cp2 { background: linear-gradient(rgba(232, 189, 16, .93) 9px, rgba(255, 207, 31, .93) 9px); }

/* task bar */
.taskbar { position: relative; height: 8px; flex: none; display: flex; background: #1a1a1a; overflow: hidden; }
.tk { height: 8px; flex: none; }
.tk-a { width: 48px; background: #0c0c0c; }
.tk-b { width: 344px; background: #f2f2f2; }
.tk-c { width: 345px; background: #1a1a1a; }
.tk-d { width: 48px; background: #444; }
.clock { position: absolute; left: 1791px; top: 1px; color: #fff; font-size: 12px; line-height: 14px; white-space: nowrap; }

/* dialog */
.dialog { position: absolute; left: 183px; top: 188px; width: 751px; height: 778px; background: #f0f0f0; box-shadow: 2px 3px 5px rgba(0, 0, 0, .45); }
.dlg-title { height: 27px; background: #2e80e2; color: #fff; display: flex; align-items: center; justify-content: space-between; padding: 1px 10px 0 7px; font-size: 12px; }
.dlg-ctl { display: flex; gap: 18px; }
.dlg-body { padding: 9px 10px 0 9px; }
.dlg-top { display: flex; gap: 7px; height: 57px; }
.grp { margin: 0; border: 1px solid #e2e2e2; min-width: 0; padding: 9px 9px 0 10px; }
.grp legend { padding: 0 1px; margin-left: -2px; height: 18px; line-height: 18px; color: #333; font-size: 12px; }
.grp-kind { width: 199px; height: 57px; padding: 0; }
.grp-kind legend { margin-left: 8px; }
.radios { display: flex; padding: 12px 0 0 10px; gap: 14px; }
.radio { display: flex; align-items: center; gap: 6px; color: #333; line-height: 16px; }
.dot { width: 12px; height: 12px; border: 1px solid #c9c9c9; border-radius: 50%; background: #fafafa; display: block; }
.dot-on { background: radial-gradient(#a8a8a8 3px, #fafafa 4px); }
.dlg-fields { flex: 1; display: flex; flex-direction: column; gap: 7px; }
.fld { height: 25px; display: flex; align-items: center; padding-top: 0; }
.fld-l { width: 86px; color: #333; padding-top: 2px; }
.fld-s { flex: 1; height: 25px; background: #fff; border: 1px solid #b4b4b4; display: flex; align-items: center; justify-content: space-between; padding: 2px 5px 0 3px; }
.grp-auto { height: 207px; margin-top: 7px; width: 731px; }
.box { background: #fff; border: 1px solid #7f7f7f; }
.box-auto { height: 171px; padding: 4px 4px; line-height: 18px; color: #222; font-size: 12px; letter-spacing: .55px; }
.box-man { height: 50px; }
.grp-manual { height: 117px; margin-top: 7px; width: 731px; }
.man-row { display: flex; align-items: center; margin-top: 6px; height: 25px; }
.btn { display: flex; align-items: center; justify-content: center; height: 25px; border: 1px solid #c9c9c9; background: #f0f0f0; color: #333; flex: none; padding-top: 1px; }
.btn-reset { width: 100px; }
.man-l { margin-left: 26px; width: 86px; white-space: nowrap; color: #333; padding-top: 1px; }
.man-r { flex: 1; height: 21px; background: #f9efe6; border: 1px solid #ececec; }
.btns { display: flex; gap: 6px; margin-top: 7px; }
.btn-w { width: 140px; }
.btn-on { background: #d3e0f1; border-color: #bcc5d0; }
.grid-wrap { margin: 26px 0 0 3px; width: 727px; height: 276px; background: #fff; border: 1px solid #c9ccd2; }
.grid { width: 725px; table-layout: fixed; border-collapse: collapse; font-size: 12px; }
.c0 { width: 13px; }
.c1 { width: 101px; }
.c2 { width: 221px; }
.grid th { height: 18px; padding: 1px 0 0; font-weight: 400; background: #f0f0f0; color: #222; border-right: 1px solid #c9ccd2; border-bottom: 2px solid #c9ccd8; text-align: center; }
.grid td { height: 21px; padding: 1px 0 0 2px; border: 1px solid #c9ccd8; border-top: 0; color: #222; white-space: nowrap; }
.grid td:first-child { border-left: 0; }
.grid td:last-child { border-right: 0; }
.grid .n { padding: 1px 0 0; background: #f0f0f0; text-align: center; }
.grid .t { background: #f9efe6; }
.grip { position: absolute; right: 3px; bottom: 3px; }
```
